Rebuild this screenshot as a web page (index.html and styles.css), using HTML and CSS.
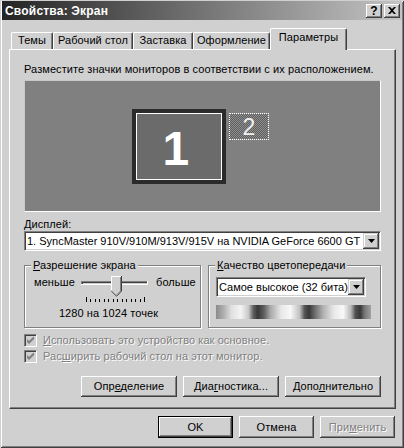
FILE: index.html
```html
<!DOCTYPE html>
<html lang="ru">
<head>
<meta charset="utf-8">
<title>Свойства: Экран</title>
<link rel="stylesheet" href="styles.css">
</head>
<body>
<div class="window">
  <div class="titlebar">
    <span class="title">Свойства: Экран</span>
    <div class="tbtns">
      <span class="tbtn q">?</span>
      <span class="tbtn"><svg width="8" height="7" viewBox="0 0 8 7"><path d="M0 0h2l2 2 2-2h2L5 3.5 8 7H6L4 5 2 7H0l3-3.5z" fill="#000"/></svg></span>
    </div>
  </div>

  <div class="tabs">
    <div class="tab t1">Темы</div>
    <div class="tab t2">Рабочий стол</div>
    <div class="tab t3">Заставка</div>
    <div class="tab t4">Оформление</div>
    <div class="tab t5 active">Параметры</div>
  </div>

  <div class="panel">
    <p class="hint">Разместите значки мониторов в соответствии с их расположением.</p>
    <div class="monitors">
      <div class="mon mon1"><span>1</span></div>
      <div class="mon mon2"><span>2</span></div>
    </div>

    <div class="lbl"><u>Д</u>исплей:</div>
    <div class="combo wide">
      <span class="combo-text">1. SyncMaster 910V/910M/913V/915V на NVIDIA GeForce 6600 GT</span>
      <span class="dd"><svg width="7" height="4" viewBox="0 0 7 4"><path d="M0 0h7L3.5 4z" fill="#000"/></svg></span>
    </div>

    <div class="groups">
      <div class="grp res">
        <span class="legend"><u>Р</u>азрешение экрана</span>
        <div class="slider-row">
          <span class="sl-l">меньше</span>
          <svg class="slider" width="67" height="27" viewBox="0 0 67 27">
            <rect x="0" y="5" width="67" height="1" fill="#808080"/>
            <rect x="0" y="5" width="1" height="4" fill="#808080"/>
            <rect x="1" y="6" width="65" height="1" fill="#404040"/>
            <rect x="1" y="6" width="1" height="2" fill="#404040"/>
            <rect x="0" y="8" width="67" height="1" fill="#ffffff"/>
            <rect x="66" y="5" width="1" height="4" fill="#ffffff"/>
            <path d="M30 0h10v15l-5 5-5-5z" fill="#d0d0d0"/>
            <path d="M30.5 15V0.5h9.5" fill="none" stroke="#fff"/>
            <path d="M40.5 0v15.2l-5 5-5.3-5.3" fill="none" stroke="#404040"/>
            <path d="M39.5 1v14l-4 4" fill="none" stroke="#808080"/>
            <g fill="#000">
              <rect x="5" y="21" width="1" height="5"/>
              <rect x="9" y="23" width="1" height="3"/>
              <rect x="14" y="23" width="1" height="3"/>
              <rect x="18" y="23" width="1" height="3"/>
              <rect x="23" y="23" width="1" height="3"/>
              <rect x="27" y="23" width="1" height="3"/>
              <rect x="32" y="23" width="1" height="3"/>
              <rect x="36" y="23" width="1" height="3"/>
              <rect x="41" y="23" width="1" height="3"/>
              <rect x="45" y="23" width="1" height="3"/>
              <rect x="50" y="23" width="1" height="3"/>
              <rect x="54" y="23" width="1" height="3"/>
              <rect x="59" y="23" width="1" height="3"/>
              <rect x="63" y="21" width="1" height="5"/>
            </g>
          </svg>
          <span class="sl-r">больше</span>
        </div>
        <div class="res-text">1280 на 1024 точек</div>
      </div>

      <div class="grp color">
        <span class="legend"><u>К</u>ачество цветопередачи</span>
        <div class="combo small">
          <span class="combo-text">Самое высокое (32 бита)</span>
          <span class="dd"><svg width="7" height="4" viewBox="0 0 7 4"><path d="M0 0h7L3.5 4z" fill="#000"/></svg></span>
        </div>
        <div class="colorbar"></div>
      </div>
    </div>

    <div class="check">
      <span class="cb"><svg width="7" height="7" viewBox="0 0 7 7"><path d="M0 2l2 2 5-5v2L2 6 0 4z" fill="#808080"/><path d="M0 3l2 2 5-5v2L2 7 0 5z" fill="#808080"/></svg></span>
      <span class="cb-text"><u>И</u>спользовать это устройство как основное.</span>
    </div>
    <div class="check">
      <span class="cb"><svg width="7" height="7" viewBox="0 0 7 7"><path d="M0 2l2 2 5-5v2L2 6 0 4z" fill="#808080"/><path d="M0 3l2 2 5-5v2L2 7 0 5z" fill="#808080"/></svg></span>
      <span class="cb-text">Рас<u>ш</u>ирить рабочий стол на этот монитор.</span>
    </div>

    <div class="btnrow">
      <button class="btn">Опр<u>е</u>деление</button>
      <button class="btn">Диа<u>г</u>ностика...</button>
      <button class="btn">Допо<u>л</u>нительно</button>
    </div>
  </div>

  <div class="footer">
    <button class="btn fbtn default">OK</button>
    <button class="btn fbtn">Отмена</button>
    <button class="btn fbtn disabled">При<u>м</u>енить</button>
  </div>
</div>
</body>
</html>
```
FILE: styles.css
```css
* { box-sizing: border-box; }

body {
  margin: 0;
  width: 404px;
  height: 448px;
  overflow: hidden;
  font-family: "Liberation Sans", Arial, sans-serif;
  font-size: 11px;
  letter-spacing: 0.08px;
  color: #000;
  background: #d0d0d0;
}

.window {
  width: 404px;
  height: 448px;
  background: #d0d0d0;
  padding: 1px 2px 0 2px;
  display: flex;
  flex-direction: column;
  box-shadow: inset 1px 1px 0 #d0d0d0, inset -1px -1px 0 #404040,
              inset 2px 2px 0 #ffffff, inset -2px -2px 0 #808080;
}

/* title bar */
.titlebar {
  height: 19px;
  flex: none;
  display: flex;
  align-items: center;
  justify-content: space-between;
  padding: 0 2px 0 3px;
  background: linear-gradient(to right, #242424, #c4c4c4);
}
.title {
  color: #fff;
  font-weight: bold;
  font-size: 12px;
  line-height: 14px;
  letter-spacing: 0.2px;
}
.tbtns { display: flex; gap: 2px; }
.tbtn {
  width: 16px;
  height: 14px;
  display: flex;
  align-items: center;
  justify-content: center;
  background: #d0d0d0;
  font-weight: bold;
  font-size: 12px;
  line-height: 12px;
  box-shadow: inset -1px -1px 0 #404040, inset 1px 1px 0 #fff, inset -2px -2px 0 #808080;
}

/* tabs */
.tabs {
  display: flex;
  align-items: flex-end;
  height: 21px;
  flex: none;
  margin: 8px 0 0 9px;
  position: relative;
  z-index: 1;
}
.tab {
  height: 17px;
  line-height: 15px;
  text-align: center;
  background: #d0d0d0;
  border-top: 1px solid #fff;
  border-left: 1px solid #fff;
  border-right: 1px solid #404040;
  border-radius: 2px 2px 0 0;
  box-shadow: inset -1px 0 0 #808080;
  white-space: nowrap;
}
.t1 { width: 42px; }
.t2 { width: 80px; }
.t3 { width: 60px; }
.t4 { width: 77px; }
.t5 { width: 77px; }
.tab.active {
  height: 22px;
  margin-bottom: -1px;
  line-height: 16px;
}

/* panel */
.panel {
  width: 387px;
  height: 360px;
  flex: none;
  margin-left: 7px;
  padding: 13px 14px 0 14px;
  border-top: 1px solid #fff;
  border-left: 1px solid #fff;
  border-right: 1px solid #404040;
  border-bottom: 1px solid #404040;
  box-shadow: inset -1px -1px 0 #808080;
  display: flex;
  flex-direction: column;
}
.hint {
  margin: 0;
  line-height: 13px;
  white-space: nowrap;
}

.monitors {
  position: relative;
  height: 132px;
  margin-top: 4px;
  background: #808080;
  border: 1px solid #c8c8c8;
  border-bottom-color: #fff;
  border-right-color: #fff;
  flex: none;
}
.mon { position: absolute; }
.mon1 {
  left: 107px;
  top: 28px;
  width: 94px;
  height: 75px;
  border: 4px solid #2b2b2b;
  background: #6b6b6b;
  box-shadow: inset 0 0 0 1px #fff;
  display: flex;
  align-items: center;
  justify-content: center;
}
.mon1 span {
  color: #fff;
  font-weight: bold;
  font-size: 48px;
  line-height: 48px;
  margin-left: -6px;
  margin-top: 4px;
}
.mon2 {
  left: 204px;
  top: 32px;
  width: 40px;
  height: 27px;
  border: 1px dotted #fff;
  background: repeating-conic-gradient(#5e5e5e 0 25%, #8e8e8e 0 50%) 0 0 / 2px 2px;
  display: flex;
  align-items: center;
  justify-content: center;
}
.mon2 span {
  color: #f0f0f0;
  font-size: 23px;
  line-height: 23px;
  margin-top: 1px;
}

.lbl {
  margin-top: 6px;
  line-height: 13px;
}

/* combo */
.combo {
  height: 20px;
  display: flex;
  align-items: center;
  background: #fff;
  border: 1px solid;
  border-color: #808080 #fff #fff #808080;
  box-shadow: inset 1px 1px 0 #404040, inset -1px -1px 0 #d0d0d0;
  padding: 1px 1px 1px 2px;
  flex: none;
}
.combo-text {
  flex: 1;
  white-space: nowrap;
  overflow: hidden;
  line-height: 16px;
  letter-spacing: 0;
}
.dd {
  width: 16px;
  height: 16px;
  flex: none;
  display: flex;
  align-items: center;
  justify-content: center;
  background: #d0d0d0;
  box-shadow: inset -1px -1px 0 #404040, inset 1px 1px 0 #d0d0d0,
              inset -2px -2px 0 #808080, inset 2px 2px 0 #fff;
}

/* groups */
.groups {
  display: flex;
  gap: 7px;
  margin-top: 14px;
  flex: none;
}
.grp {
  position: relative;
  height: 63px;
  border: 1px solid #808080;
  box-shadow: inset 1px 1px 0 #fff, 1px 1px 0 #fff;
  padding-top: 10px;
}
.grp.res { width: 177px; }
.grp.color { width: 173px; padding-left: 7px; }
.legend {
  position: absolute;
  top: -7px;
  left: 6px;
  padding: 0 2px 0 2px;
  background: #d0d0d0;
  line-height: 13px;
  white-space: nowrap;
}
.slider-row {
  display: flex;
  align-items: flex-start;
  height: 27px;
}
.sl-l {
  width: 56px;
  padding-left: 9px;
  line-height: 13px;
}
.slider { display: block; flex: none; }
.sl-r {
  margin-left: 8px;
  line-height: 13px;
}
.res-text {
  margin-top: 4px;
  line-height: 13px;
  text-align: center;
  padding-right: 8px;
}
.combo.small { width: 150px; margin-top: 1px; }
.colorbar {
  width: 155px;
  height: 14px;
  margin-top: 8px;
  background: linear-gradient(to right,
    #8a8a8a 0%, #b0b0b0 5%, #e0e0e0 10%, #f4f4f4 16%, #c8c8c8 21%,
    #606060 24%, #383838 27%, #606060 31%, #a8a8a8 35%, #e8e8e8 42%,
    #f8f8f8 48%, #c0c0c0 54%, #585858 57%, #383838 60%, #707070 64%,
    #b0b0b0 69%, #e8e8e8 76%, #f8f8f8 82%, #b8b8b8 87%, #505050 90%,
    #383838 93%, #787878 96%, #a0a0a0 100%);
}

/* checkboxes */
.check {
  display: flex;
  align-items: flex-start;
  gap: 6px;
  height: 16px;
  padding-top: 2px;
  flex: none;
}
.groups + .check { margin-top: 4px; }
.cb {
  width: 13px;
  height: 13px;
  flex: none;
  display: flex;
  align-items: center;
  justify-content: center;
  background: #d0d0d0;
  border: 1px solid;
  border-color: #808080 #fff #fff #808080;
  box-shadow: inset 1px 1px 0 #404040, inset -1px -1px 0 #d0d0d0;
}
.cb-text {
  line-height: 13px;
  color: #808080;
  text-shadow: 1px 1px 0 #fff;
  white-space: nowrap;
}

/* buttons */
.btnrow {
  display: flex;
  justify-content: flex-end;
  gap: 6px;
  margin-top: 12px;
  flex: none;
}
.btn {
  width: 96px;
  height: 21px;
  padding: 0;
  font-family: "Liberation Sans", Arial, sans-serif;
  font-size: 11px;
  letter-spacing: 0.08px;
  color: #000;
  background: #d0d0d0;
  border: none;
  border-radius: 0;
  box-shadow: inset -1px -1px 0 #404040, inset 1px 1px 0 #fff, inset -2px -2px 0 #808080;
  line-height: 13px;
}
.footer {
  display: flex;
  justify-content: flex-end;
  gap: 6px;
  margin: 7px 7px 0 0;
  flex: none;
}
.fbtn { width: 75px; height: 22px; }
.btn.default {
  box-shadow: inset 0 0 0 1px #000, inset -2px -2px 0 #404040,
              inset 2px 2px 0 #fff, inset -3px -3px 0 #808080;
}
.btn.disabled {
  color: #808080;
  text-shadow: 1px 1px 0 #fff;
}
```
